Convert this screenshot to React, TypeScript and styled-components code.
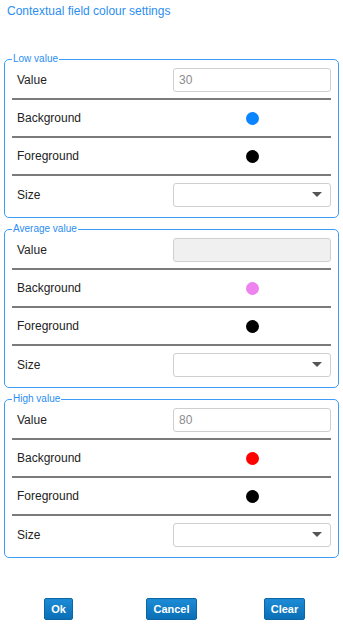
import React from "react";
import styled, { createGlobalStyle } from "styled-components";

interface Level {
  title: string;
  value: string;
  disabled?: boolean;
  background: string;
}

const levels: Level[] = [
  { title: "Low value", value: "30", background: "#0a84ff" },
  { title: "Average value", value: "", disabled: true, background: "#ee82ee" },
  { title: "High value", value: "80", background: "#ff0000" },
];

const GlobalStyle = createGlobalStyle`
  body {
    margin: 0;
    background: #fff;
    font-family: "Liberation Sans", Arial, sans-serif;
  }
`;

export default function App() {
  return (
    <Page>
      <GlobalStyle />
      <Title>Contextual field colour settings</Title>
      {levels.map((level) => (
        <Group key={level.title}>
          <Legend>{level.title}</Legend>
          <Row first>
            <Label>Value</Label>
            <TextInput
              value={level.value}
              disabled={level.disabled}
              readOnly
            />
          </Row>
          <Row>
            <Label>Background</Label>
            <Swatch color={level.background} />
          </Row>
          <Row>
            <Label>Foreground</Label>
            <Swatch color="#000" />
          </Row>
          <Row last>
            <Label>Size</Label>
            <Select>
              <Arrow />
            </Select>
          </Row>
        </Group>
      ))}
      <Buttons>
        <Button>Ok</Button>
        <Button>Cancel</Button>
        <Button>Clear</Button>
      </Buttons>
    </Page>
  );
}

const Page = styled.div`
  width: 343px;
  height: 630px;
  box-sizing: border-box;
  padding: 0 4px;
`;

const Title = styled.div`
  padding: 4px 0 0 3px;
  line-height: 14px;
  font-size: 12px;
  color: #2b8ef0;
  margin-bottom: 36px;
`;

const Group = styled.fieldset`
  margin: 0 0 6px;
  padding: 0 7px 4px;
  border: 1px solid #3d9cf5;
  border-radius: 5px;
  min-width: 0;
`;

const Legend = styled.legend`
  padding: 0 1px;
  font-size: 10px;
  line-height: 10px;
  color: #2b8ef0;
`;

const Row = styled.div<{ first?: boolean; last?: boolean }>`
  display: grid;
  grid-template-columns: 1fr 158px;
  align-items: center;
  height: ${(p) => (p.last ? "37px" : "36px")};
  margin-top: ${(p) => (p.first ? "-2px" : "0")};
  padding-left: 5px;
  border-bottom: ${(p) => (p.last ? "none" : "2px solid #7b7b7b")};
`;

const Label = styled.span`
  font-size: 12px;
  color: #222;
`;

const TextInput = styled.input`
  box-sizing: border-box;
  width: 158px;
  height: 24px;
  margin: 0;
  padding: 0 5px;
  border: 1px solid #cfcfcf;
  border-radius: 3px;
  font-family: "Liberation Sans", Arial, sans-serif;
  font-size: 12px;
  color: #8c8c8c;
  background: #fff;
  outline: none;

  &:disabled {
    background: #f0f0f0;
  }
`;

const Swatch = styled.span<{ color: string }>`
  justify-self: center;
  width: 13px;
  height: 13px;
  border-radius: 50%;
  background: ${(p) => p.color};
`;

const Select = styled.div`
  box-sizing: border-box;
  width: 158px;
  height: 24px;
  display: flex;
  align-items: center;
  justify-content: flex-end;
  padding-right: 8px;
  border: 1px solid #cfcfcf;
  border-radius: 3px;
  background: #fff;
`;

const Arrow = styled.span`
  width: 0;
  height: 0;
  border-left: 5px solid transparent;
  border-right: 5px solid transparent;
  border-top: 5px solid #555;
`;

const Buttons = styled.div`
  display: grid;
  grid-template-columns: repeat(3, 1fr);
  justify-items: center;
  margin: 40px -2px 0;
`;

const Button = styled.button`
  height: 22px;
  padding: 0 6px;
  border: 1px solid #0c66a4;
  border-radius: 2px;
  background: linear-gradient(#1c8bd6, #0a6fb6);
  color: #fff;
  font-family: "Liberation Sans", Arial, sans-serif;
  font-weight: bold;
  font-size: 11px;
  cursor: pointer;
`;
